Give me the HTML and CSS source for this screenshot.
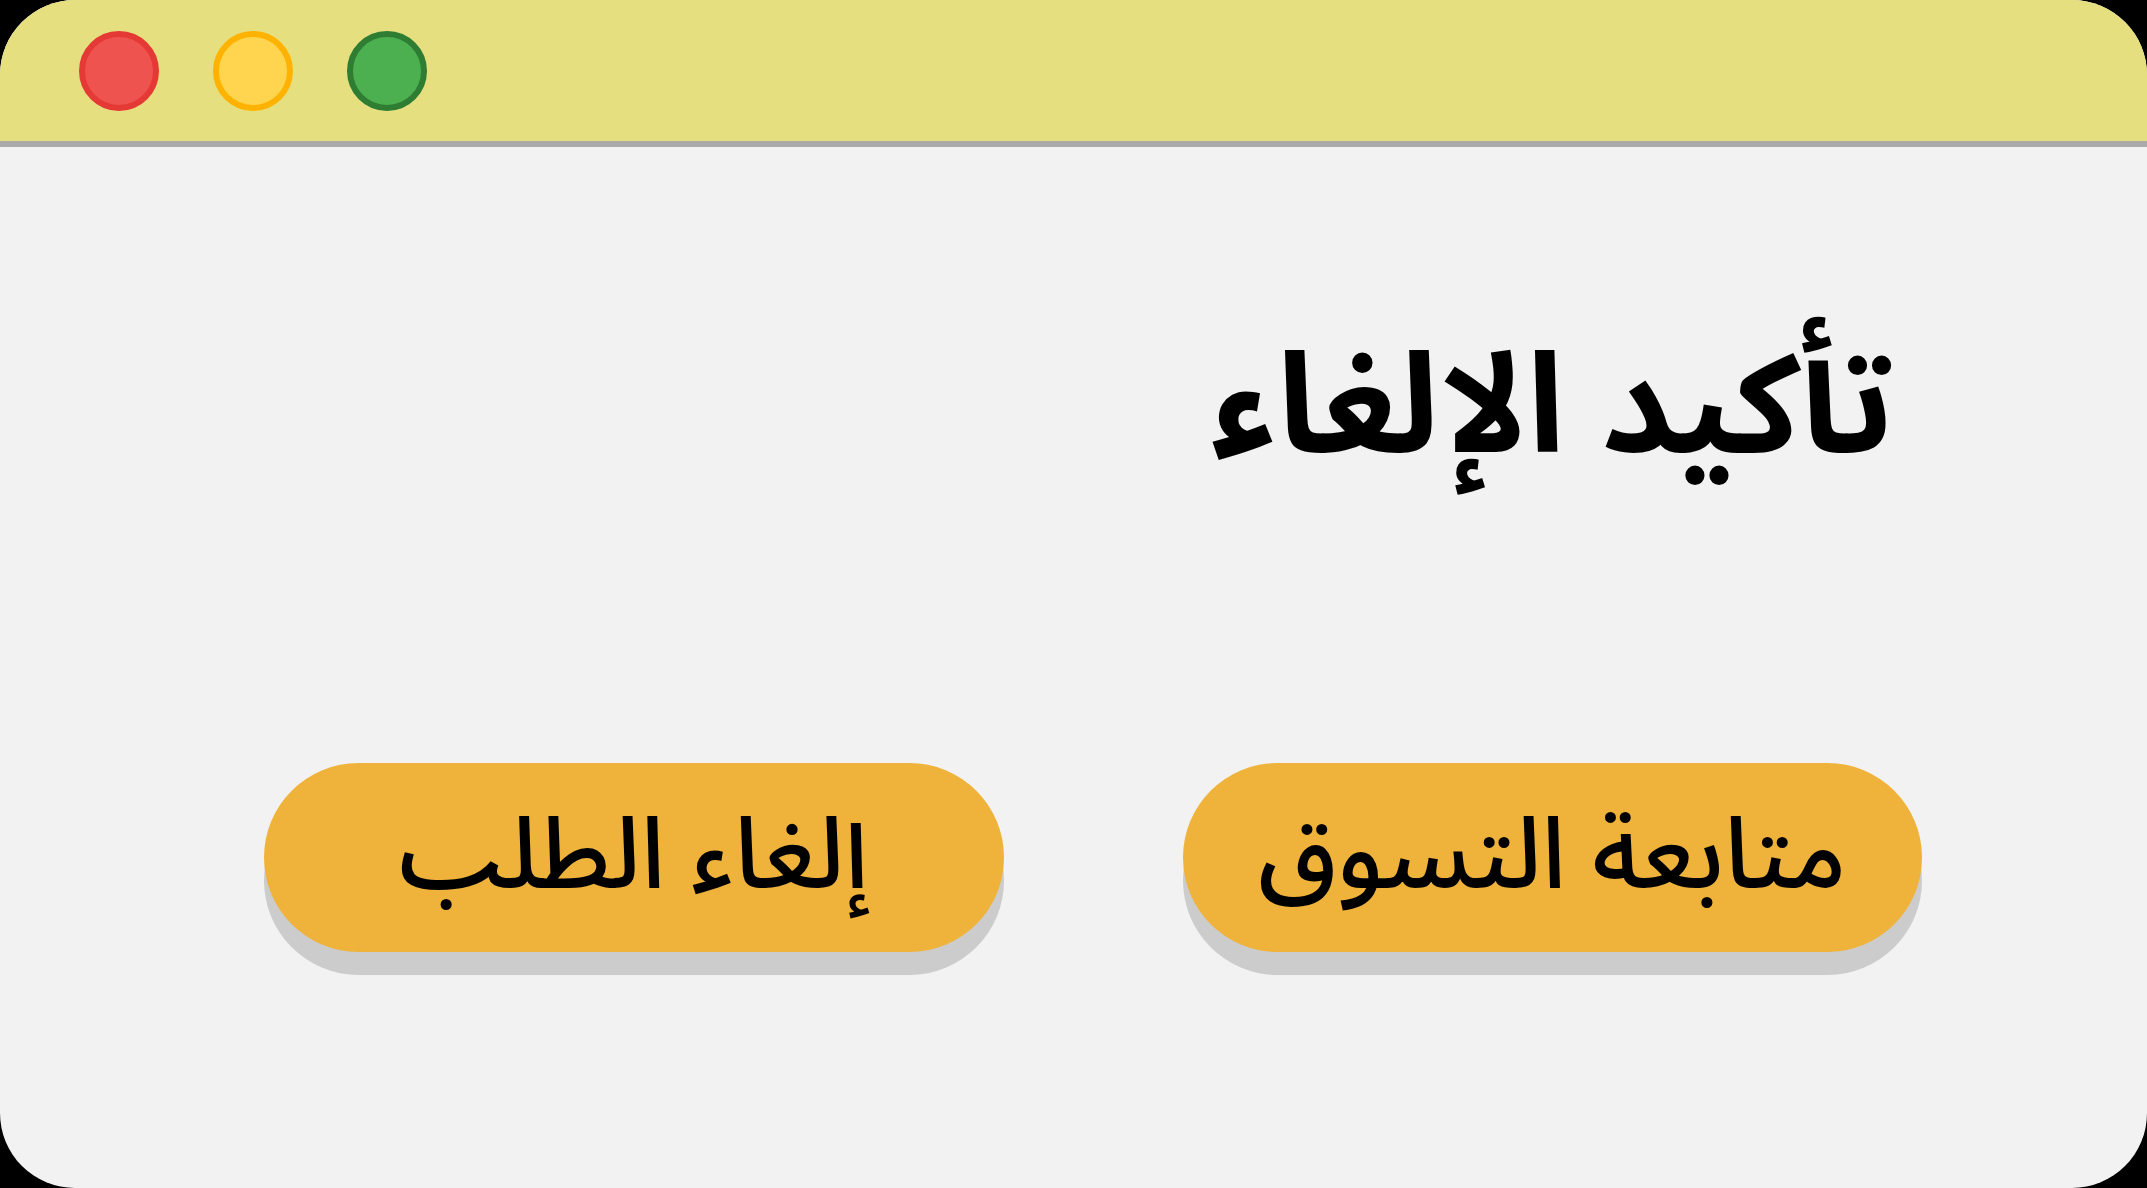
FILE: index.html
```html
<!DOCTYPE html>
<html lang="ar">
<head>
<meta charset="utf-8">
<title>تأكيد الإلغاء</title>
<link rel="stylesheet" href="styles.css">
</head>
<body>
<div class="window">
  <div class="titlebar">
    <span class="dot dot-red"></span>
    <span class="dot dot-yellow"></span>
    <span class="dot dot-green"></span>
  </div>
  <div class="content" dir="rtl">
    <h1 class="title">تأكيد الإلغاء</h1>
    <div class="actions">
      <button class="btn">متابعة التسوق</button>
      <button class="btn">إلغاء الطلب</button>
    </div>
  </div>
</div>
</body>
</html>
```
FILE: styles.css
```css
html, body {
  margin: 0;
  padding: 0;
  background: #000;
}
.window {
  width: 2147px;
  height: 1188px;
  background: #f2f2f2;
  border-radius: 75px;
  overflow: hidden;
  display: flex;
  flex-direction: column;
  font-family: "Noto Sans Arabic", "Noto Sans Arabic UI", "Noto Sans", "DejaVu Sans", sans-serif;
}
.titlebar {
  height: 141px;
  background: #e5df80;
  border-bottom: 6px solid #aaaaaa;
  display: flex;
  align-items: center;
  gap: 54px;
  padding-left: 79px;
  box-sizing: content-box;
}
.dot {
  width: 68px;
  height: 68px;
  border-radius: 50%;
  border: 6px solid;
  display: block;
}
.dot-red { background: #ef5350; border-color: #e53935; }
.dot-yellow { background: #ffd54f; border-color: #ffb300; }
.dot-green { background: #4caf50; border-color: #2e7d32; }
.content {
  flex: 1;
  display: flex;
  flex-direction: column;
  padding: 0 225px 0 264px;
}
.title {
  margin: 164px 28px 0 0;
  font-size: 139px;
  font-weight: bold;
  line-height: 1.4;
  color: #000;
  text-align: right;
}
.actions {
  display: flex;
  gap: 179px;
  margin-top: 257px;
}
.btn {
  width: 740px;
  height: 189px;
  border: none;
  border-radius: 95px;
  background: #efb33b;
  box-shadow: 0 23px 0 #cccccc;
  font-family: inherit;
  font-size: 100px;
  font-weight: 500;
  line-height: 1;
  color: #000;
  padding: 0;
  cursor: pointer;
}
```
